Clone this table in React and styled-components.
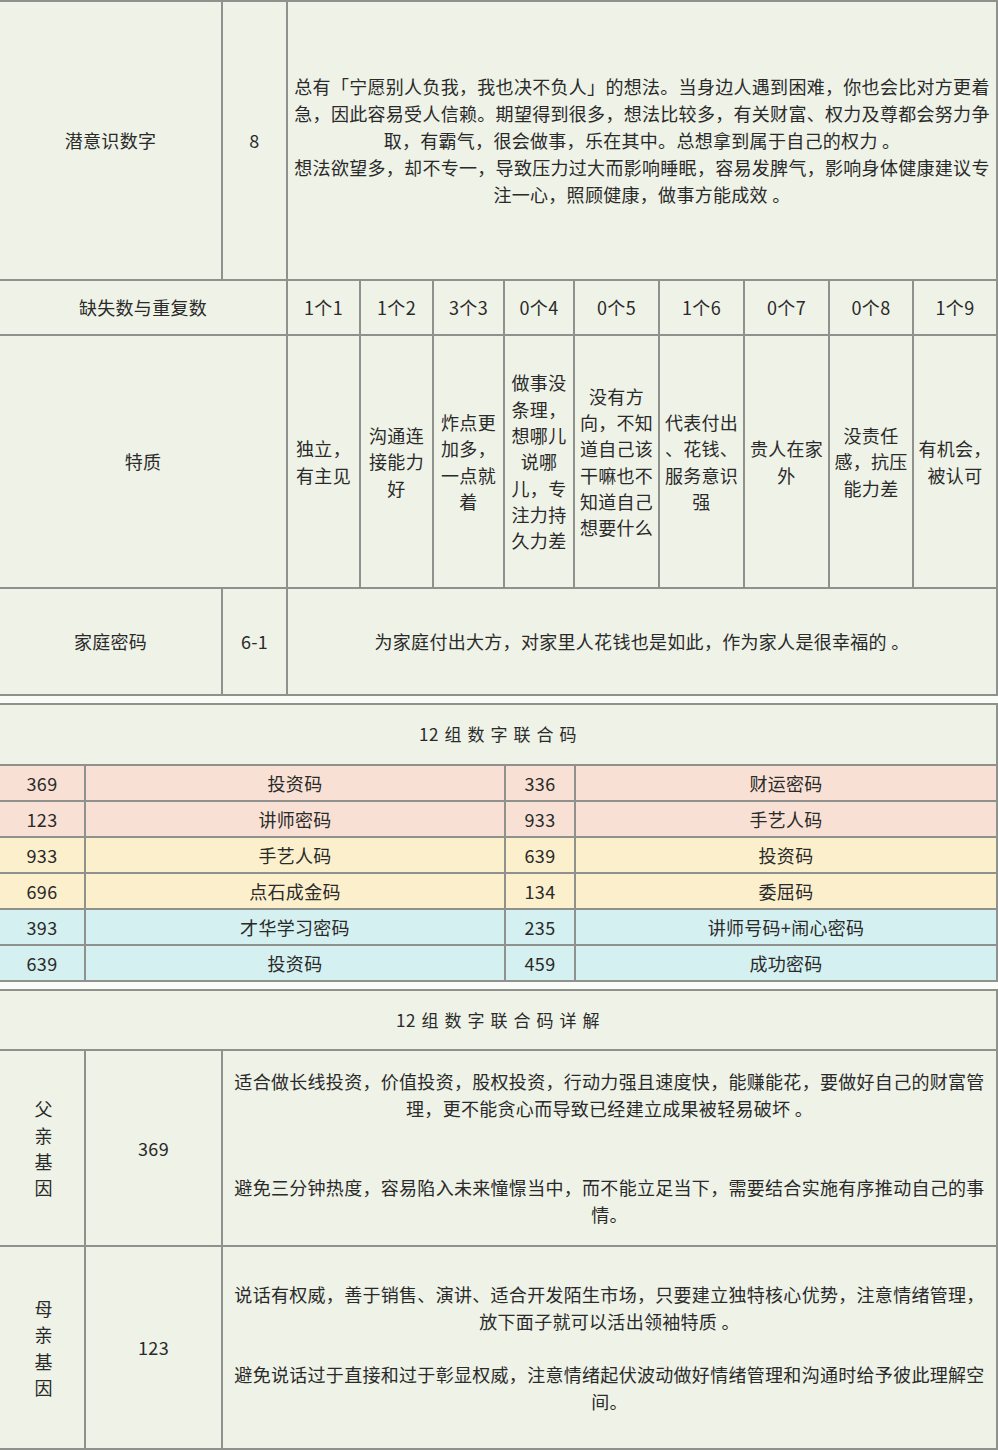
import React from "react";
import styled, { createGlobalStyle } from "styled-components";

const GlobalStyle = createGlobalStyle`
  html, body {
    margin: 0;
    padding: 0;
    background: #fafcf7;
  }
  body {
    font-family: "Noto Sans CJK SC", "Noto Sans", sans-serif;
    color: #2a2a2a;
  }
`;

const Page = styled.div`
  width: 998px;
  display: flex;
  flex-direction: column;
  gap: 7px;
`;

const Sheet = styled.div`
  display: grid;
  grid-template-columns: ${(p) => p.$cols};
  grid-template-rows: ${(p) => p.$rows};
  gap: 2px;
  padding: 2px 2px 2px 0;
  background: #8f918c;
`;

const palette = {
  base: "#eef2e7",
  peach: "#f8e1d4",
  yellow: "#fcefcc",
  cyan: "#d5f0f0",
};

const Cell = styled.div`
  grid-column: ${(p) => p.$span || "auto"};
  background: ${(p) => palette[p.$tone || "base"]};
  display: flex;
  align-items: center;
  justify-content: center;
  text-align: center;
  font-size: 18px;
  line-height: 27px;
  letter-spacing: 0.3px;
  padding: 0 ${(p) => p.$pad ?? 2}px;
  box-sizing: border-box;
  min-width: 0;
`;

const Title = styled(Cell)`
  grid-column: 1 / -1;
  font-size: 17px;
  letter-spacing: 0.6px;
  word-spacing: 1px;
  padding-bottom: 2px;
`;

const Lines = styled.div`
  display: flex;
  flex-direction: column;
  align-items: center;
  line-height: 26.3px;
  white-space: nowrap;
`;

const Vertical = styled.div`
  width: 1em;
  margin-left: 3px;
  line-height: 26.3px;
  word-break: break-all;
`;

const Prose = styled.div`
  display: flex;
  flex-direction: column;
  gap: ${(p) => p.$gap}px;
  text-align: center;
  line-height: 27px;
`;

const traits = [
  ["独立，", "有主见"],
  ["沟通连", "接能力", "好"],
  ["炸点更", "加多，", "一点就", "着"],
  ["做事没", "条理，", "想哪儿", "说哪", "儿，专", "注力持", "久力差"],
  ["没有方", "向，不知", "道自己该", "干嘛也不", "知道自己", "想要什么"],
  ["代表付出", "、花钱、", "服务意识", "强"],
  ["贵人在家", "外"],
  ["没责任", "感，抗压", "能力差"],
  ["有机会，", "被认可"],
];

const counts = ["1个1", "1个2", "3个3", "0个4", "0个5", "1个6", "0个7", "0个8", "1个9"];

const codes = [
  ["369", "投资码", "336", "财运密码", "peach"],
  ["123", "讲师密码", "933", "手艺人码", "peach"],
  ["933", "手艺人码", "639", "投资码", "yellow"],
  ["696", "点石成金码", "134", "委屈码", "yellow"],
  ["393", "才华学习密码", "235", "讲师号码+闹心密码", "cyan"],
  ["639", "投资码", "459", "成功密码", "cyan"],
];

const genes = [
  {
    name: "父亲基因",
    num: "369",
    gap: 52,
    paras: [
      "适合做长线投资，价值投资，股权投资，行动力强且速度快，能赚能花，要做好自己的财富管理，更不能贪心而导致已经建立成果被轻易破坏 。",
      "避免三分钟热度，容易陷入未来憧憬当中，而不能立足当下，需要结合实施有序推动自己的事情。",
    ],
  },
  {
    name: "母亲基因",
    num: "123",
    gap: 26,
    paras: [
      "说话有权威，善于销售、演讲、适合开发陌生市场，只要建立独特核心优势，注意情绪管理，放下面子就可以活出领袖特质 。",
      "避免说话过于直接和过于彰显权威，注意情绪起伏波动做好情绪管理和沟通时给予彼此理解空间。",
    ],
  },
];

export default function App() {
  return (
    <>
      <GlobalStyle />
      <Page>
        <Sheet
          $cols="221px 63px 71px 71px 69px 68px 83px 83px 83px 82px 1fr"
          $rows="277px 53px 251px 105px"
        >
          <Cell>潜意识数字</Cell>
          <Cell>8</Cell>
          <Cell $span="3 / -1" $pad={4}>
            <Prose $gap={0}>
              <div>
                总有「宁愿别人负我，我也决不负人」的想法。当身边人遇到困难，你也会比对方更着急，因此容易受人信赖。期望得到很多，想法比较多，有关财富、权力及尊都会努力争取，有霸气，很会做事，乐在其中。总想拿到属于自己的权力 。
              </div>
              <div>
                想法欲望多，却不专一，导致压力过大而影响睡眠，容易发脾气，影响身体健康建议专注一心，照顾健康，做事方能成效 。
              </div>
            </Prose>
          </Cell>

          <Cell $span="1 / 3">缺失数与重复数</Cell>
          {counts.map((c) => (
            <Cell key={c}>{c}</Cell>
          ))}

          <Cell $span="1 / 3">特质</Cell>
          {traits.map((lines, i) => (
            <Cell key={i} $pad={0}>
              <Lines>
                {lines.map((l, j) => (
                  <span key={j}>{l}</span>
                ))}
              </Lines>
            </Cell>
          ))}

          <Cell>家庭密码</Cell>
          <Cell>6-1</Cell>
          <Cell $span="3 / -1">
            为家庭付出大方，对家里人花钱也是如此，作为家人是很幸福的 。
          </Cell>
        </Sheet>

        <Sheet $cols="84px 418px 68px 1fr" $rows="59px repeat(6, 34px)">
          <Title>12 组 数 字 联 合 码</Title>
          {codes.map(([a, b, c, d, tone], i) => (
            <React.Fragment key={i}>
              <Cell $tone={tone}>{a}</Cell>
              <Cell $tone={tone}>{b}</Cell>
              <Cell $tone={tone}>{c}</Cell>
              <Cell $tone={tone}>{d}</Cell>
            </React.Fragment>
          ))}
        </Sheet>

        <Sheet $cols="84px 135px 1fr" $rows="58px 194px 201px">
          <Title>12 组 数 字 联 合 码 详 解</Title>
          {genes.map((g) => (
            <React.Fragment key={g.name}>
              <Cell>
                <Vertical>{g.name}</Vertical>
              </Cell>
              <Cell>{g.num}</Cell>
              <Cell $pad={4}>
                <Prose $gap={g.gap}>
                  {g.paras.map((p, k) => (
                    <div key={k}>{p}</div>
                  ))}
                </Prose>
              </Cell>
            </React.Fragment>
          ))}
        </Sheet>
      </Page>
    </>
  );
}
